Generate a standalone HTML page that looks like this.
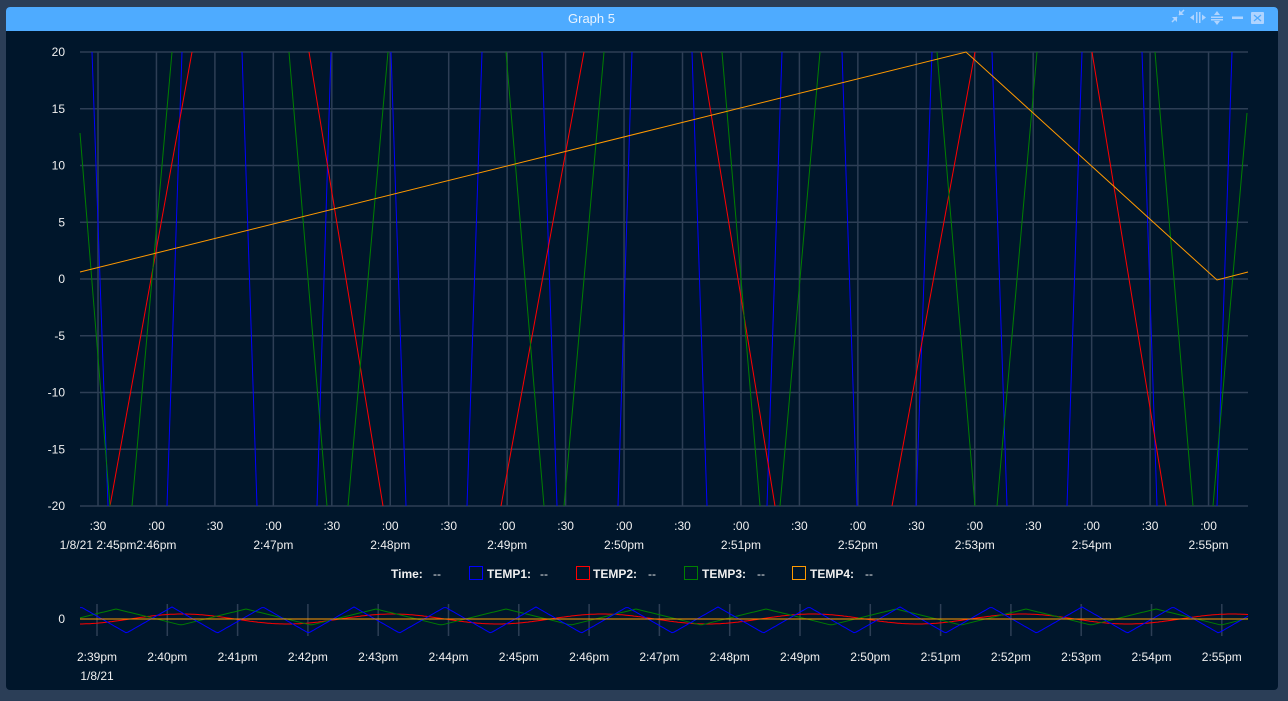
<!DOCTYPE html>
<html><head><meta charset="utf-8"><style>
body{margin:0;width:1288px;height:701px;background:#2b3e57;font-family:"Liberation Sans",sans-serif;overflow:hidden;position:relative}
#panel{position:absolute;left:6px;top:7px;width:1272px;height:683px;background:#00162b;border-radius:4px;overflow:hidden}
#title{height:24px;background:#4eabff;color:#e8f3ff;font-size:13px;line-height:24px;position:relative}
#title span{position:absolute;left:562px;top:0}
svg{position:absolute;left:0;top:0}
text{font-family:"Liberation Sans",sans-serif;fill:#f0f0f0;font-size:12px}
</style></head><body>
<div id="panel"><div id="title"><span>Graph 5</span></div></div>
<svg width="1288" height="701" id="s">
<g fill="#c0dcff" opacity="0.85">
<path d="M1172 22 l5-5 M1179 15 l5-5" stroke="#c0dcff" stroke-width="1.5"/>
<path d="M1172 17 h5 v5z M1184 15 h-5 v-5z"/>
<rect x="1196" y="12" width="1.5" height="11"/><rect x="1199" y="12" width="1.5" height="11"/>
<path d="M1190 17.5 l4-3 v6z M1206 17.5 l-4-3 v6z"/>
<rect x="1211" y="16.5" width="12" height="1.5"/><rect x="1211" y="19" width="12" height="1.5"/>
<path d="M1217 11 l-3 4 h6z M1217 25 l-3-4 h6z"/>
<rect x="1232" y="16.5" width="11" height="2.5"/>
<rect x="1251" y="12" width="13" height="12" rx="1"/>
<path d="M1254 15 l7 6 M1261 15 l-7 6" stroke="#4eabff" stroke-width="1.3"/>
</g>
<g id="grid" stroke="#2d3e55" stroke-width="1.5"></g>
<g id="lines" fill="none" stroke-width="1"></g>
<g id="labels"></g>
<g font-size="12.5">
<text x="391" y="578" font-weight="bold">Time:</text><text x="433" y="578">--</text>
<rect x="469.5" y="566.5" width="13" height="13" fill="none" stroke="#0000ff"/>
<text x="487" y="578" font-weight="bold">TEMP1:</text><text x="540" y="578">--</text>
<rect x="576.5" y="566.5" width="13" height="13" fill="none" stroke="#ff0000"/>
<text x="593" y="578" font-weight="bold">TEMP2:</text><text x="648" y="578">--</text>
<rect x="684.5" y="566.5" width="13" height="13" fill="none" stroke="#008000"/>
<text x="702" y="578" font-weight="bold">TEMP3:</text><text x="757" y="578">--</text>
<rect x="792.5" y="566.5" width="13" height="13" fill="none" stroke="#ff9900"/>
<text x="810" y="578" font-weight="bold">TEMP4:</text><text x="865" y="578">--</text>
</g>
</svg>
<script>
var NS="http://www.w3.org/2000/svg";
function el(p,t,a,txt){var e=document.createElementNS(NS,t);for(var k in a)e.setAttribute(k,a[k]);if(txt!=null)e.textContent=txt;document.getElementById(p).appendChild(e);return e;}
var T=52,B=506;
for(var i=0;i<9;i++){var y=T+i*(B-T)/8;el("grid","line",{x1:80,x2:1248,y1:y,y2:y});
el("labels","text",{x:65,y:y+4,"text-anchor":"end"},[20,15,10,5,0,-5,-10,-15,-20][i]);}
var vx=[];for(var i=0;i<20;i++){var x=98+i*58.45;vx.push(x);el("grid","line",{x1:x,x2:x,y1:T,y2:B});
el("labels","text",{x:x,y:530,"text-anchor":"middle"},i%2?":00":":30");}
el("labels","text",{x:118,y:549,"text-anchor":"middle"},"1/8/21 2:45pm2:46pm");
var ls=["2:47pm","2:48pm","2:49pm","2:50pm","2:51pm","2:52pm","2:53pm","2:54pm","2:55pm"];
for(var i=0;i<9;i++)el("labels","text",{x:vx[3+2*i],y:549,"text-anchor":"middle"},ls[i]);
function seg(c,a){for(var i=0;i<a.length;i++){var s=a[i];el("lines","line",{x1:s[0],y1:s[1],x2:s[2],y2:s[3],stroke:c});}}
var blue=[[92,108],[182,167],[242,257],[331,317],[391,406],[482,467],[542,557],[632,618],[692,707],[782,767],[842,857],[932,916],[992,1007],[1082,1067],[1142,1157],[1232,1217]];
seg("#0000ff",blue.map(function(p){return [p[0],T,p[1],B]}));
seg("#ff0000",[[110,B,192,T],[309,T,383,B],[501,B,584,T],[701,T,775,B],[892,B,975,T],[1092,T,1166,B]]);
seg("#008000",[[80,133,110,B],[132,B,172,T],[289,T,327,B],[348,B,388,T],[506,T,544,B],[564,B,604,T],[722,T,760,B],[780,B,820,T],[937,T,975,B],[997,B,1037,T],[1155,T,1193,B],[1213,B,1247,113]]);
el("lines","polyline",{points:"80,272 966,52 1217,280 1248,272",stroke:"#ff9900"});
var nx=[];for(var i=0;i<17;i++){var x=97+i*70.3;nx.push(x);el("grid","line",{x1:x,x2:x,y1:604,y2:636});
el("labels","text",{x:x,y:661,"text-anchor":"middle"},"2:"+(39+i)+"pm");}
el("labels","text",{x:97,y:680,"text-anchor":"middle"},"1/8/21");
el("labels","text",{x:65,y:623,"text-anchor":"end"},"0");
function tri(x,p,ph){var t=((x-ph)/p)%1;if(t<0)t+=1;return t<0.5?1-4*t:-3+4*t;}
function poly(c,f){var pts=[];for(var x=80;x<=1248;x+=2)pts.push(x+","+f(x).toFixed(1));el("lines","polyline",{points:pts.join(" "),stroke:c});}
poly("#ff0000",function(x){return 619-5*Math.sin((x-130)/210*2*Math.PI)});
poly("#008000",function(x){return 617-8*tri(x,130,116)});
poly("#0000ff",function(x){return 620-13*tri(x,91,81)});
poly("#ff9900",function(x){return 619});
</script>
</body></html>
